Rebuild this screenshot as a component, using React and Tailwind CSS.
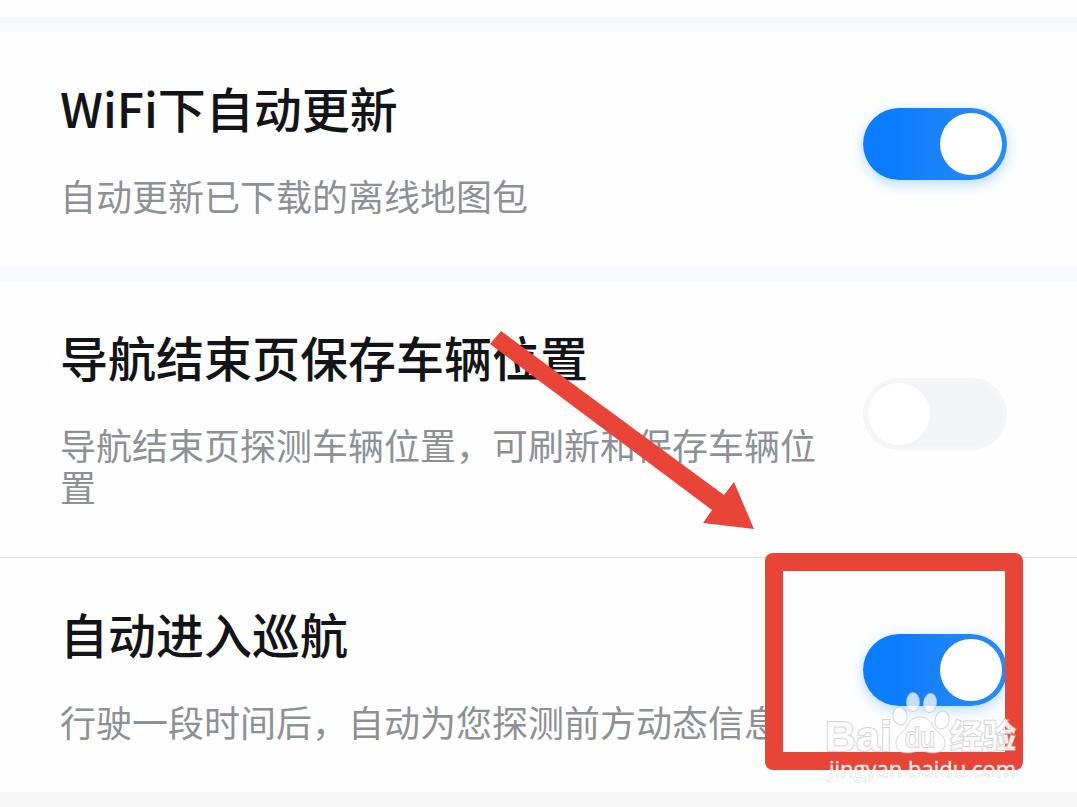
import { useState } from 'react';
import clsx from 'clsx';

function Toggle({ id, checked, onChange }) {
  return (
    <label
      htmlFor={id}
      className={clsx(
        'mb-[5px] flex h-18 w-36 shrink-0 cursor-pointer items-center rounded-full px-[5px]',
        'has-[:focus-visible]:outline-2 has-[:focus-visible]:outline-offset-4 has-[:focus-visible]:outline-[#0a7cff]',
        checked
          ? 'justify-end bg-linear-to-r from-[#0a7cff] from-20% to-[#2a8cf0] shadow-[0_4px_14px_rgba(70,165,255,0.4)]'
          : 'justify-start bg-[#f2f4f8] inset-ring-4 inset-ring-[#f6f6f7]'
      )}
    >
      <input
        id={id}
        type="checkbox"
        checked={checked}
        onChange={(e) => onChange(e.target.checked)}
        className="h-[62px] w-[62px] cursor-pointer appearance-none rounded-full bg-white outline-none"
      />
    </label>
  );
}

function SettingRow({ id, title, desc, defaultChecked = false, children }) {
  const [checked, setChecked] = useState(defaultChecked);

  return (
    <section className="relative flex items-center justify-between gap-10 bg-[#fefefe] pt-[45px] pr-[70px] pb-[50px] pl-15">
      <div className="flex min-w-0 flex-1 flex-col gap-[37px]">
        <label htmlFor={id} className="text-[48px] leading-[60px] font-medium text-[#131417]">
          {title}
        </label>
        <p className="text-[36px] leading-[42px] text-[#8d9196]">{desc}</p>
      </div>
      <Toggle id={id} checked={checked} onChange={setChecked} />
      {children}
    </section>
  );
}

function Arrow() {
  return (
    <svg
      className="pointer-events-none absolute top-[50px] left-[490px] z-10"
      width="266"
      height="200"
      viewBox="0 0 266 200"
      aria-hidden="true"
    >
      <path d="M11 0 L234 164 L244 151 L264 198 L213 192 L222 179 L0 13 Z" fill="#e84538" />
    </svg>
  );
}

function Watermark() {
  return (
    <svg
      className="pointer-events-none absolute top-[132px] right-[54px] z-20"
      width="200"
      height="97"
      viewBox="-4 0 200 97"
    >
      <g fill="#ffffff" fillOpacity="0.75" stroke="#c4c4c4" strokeOpacity="0.7" strokeWidth="1">
        <ellipse cx="73" cy="26" rx="7" ry="9" transform="rotate(-12 73 26)" />
        <ellipse cx="86" cy="12" rx="6.5" ry="9.5" />
        <ellipse cx="103" cy="13" rx="6.5" ry="9.5" transform="rotate(8 103 13)" />
        <ellipse cx="115" cy="30" rx="7" ry="9" transform="rotate(14 115 30)" />
        <path d="M93 27 C101 27 104 32 107 38 C110 43 118 45 118 53 C118 60 113 63 106 63 C101 63 98 61 93 61 C88 61 86 63 81 63 C73 63 69 60 69 53 C69 46 76 43 79 38 C82 32 85 27 93 27 Z" />
      </g>
      <g fill="#ffffff" fillOpacity="0.85" stroke="#c4c4c4" strokeOpacity="0.7" strokeWidth="2" paintOrder="stroke">
        <text x="-2" y="61" fontSize="43" fontWeight="700" fontFamily="Liberation Sans, Arial, sans-serif">
          Bai
        </text>
        <text x="78" y="57" fontSize="27" fontFamily="Liberation Sans, Arial, sans-serif">
          du
        </text>
        <text x="123" y="58" fontSize="33" fontWeight="700" fontFamily="Noto Sans CJK SC, sans-serif">
          经验
        </text>
      </g>
      <text
        x="2"
        y="87"
        fontSize="22"
        fontFamily="Open Sans, Noto Sans, sans-serif"
        fill="#ffffff"
        fillOpacity="0.9"
        stroke="#c4c4c4"
        strokeOpacity="0.6"
        strokeWidth="1"
        paintOrder="stroke"
      >
        jingyan.baidu.com
      </text>
    </svg>
  );
}

export default function App() {
  return (
    <main className="min-h-screen overflow-hidden bg-[#f7f7f8] font-['Noto_Sans_CJK_SC',sans-serif]">
      <div className="h-[17px] bg-[#fefefe]" />
      <div className="h-[15px] bg-[#f7f8fa]" />
      <SettingRow id="wifi-update" title="WiFi下自动更新" desc="自动更新已下载的离线地图包" defaultChecked />
      <div className="h-[15px] bg-[#f7f8fb]" />
      <SettingRow
        id="save-position"
        title="导航结束页保存车辆位置"
        desc="导航结束页探测车辆位置，可刷新和保存车辆位置"
      >
        <Arrow />
      </SettingRow>
      <div className="h-px bg-[#e3e4e6]" />
      <SettingRow
        id="auto-cruise"
        title="自动进入巡航"
        desc="行驶一段时间后，自动为您探测前方动态信息"
        defaultChecked
      >
        <div className="pointer-events-none absolute -top-[5px] right-[54px] z-10 h-[217px] w-[258px] rounded-lg border-[18px] border-[#e84538]" />
        <Watermark />
      </SettingRow>
    </main>
  );
}
